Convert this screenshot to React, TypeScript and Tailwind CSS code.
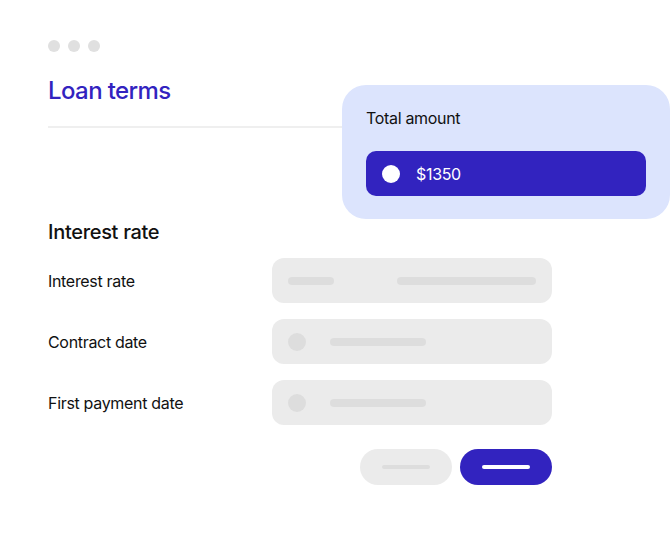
import React from 'react';

const fields = [
  { label: 'Interest rate', kind: 'split' },
  { label: 'Contract date', kind: 'dot' },
  { label: 'First payment date', kind: 'dot' },
];

const FieldPlaceholder: React.FC<{ kind: string }> = ({ kind }) => {
  if (kind === 'split') {
    return (
      <div className="flex h-[45px] w-[280px] items-center justify-between rounded-xl bg-[#ebebeb] px-4">
        <div className="h-2 w-[46px] rounded-full bg-[#dddddd]" />
        <div className="h-2 w-[139px] rounded-full bg-[#dddddd]" />
      </div>
    );
  }
  return (
    <div className="flex h-[45px] w-[280px] items-center gap-6 rounded-xl bg-[#ebebeb] px-4">
      <div className="h-[18px] w-[18px] rounded-full bg-[#dddddd]" />
      <div className="h-2 w-[96px] rounded-full bg-[#dddddd]" />
    </div>
  );
};

const App: React.FC = () => {
  return (
    <div
      className="relative h-[550px] w-[670px] overflow-hidden bg-white text-[#111111]"
      style={{ fontFamily: 'Inter, "Noto Sans", sans-serif' }}
    >
      <div className="flex flex-col pl-12 pt-10">
        <div className="flex gap-2">
          <div className="h-3 w-3 rounded-full bg-[#e0e0e0]" />
          <div className="h-3 w-3 rounded-full bg-[#e0e0e0]" />
          <div className="h-3 w-3 rounded-full bg-[#e0e0e0]" />
        </div>

        <h1 className="mt-[23px] text-[24px] font-medium leading-8 tracking-[-0.025em] text-[#3223bf]">
          Loan terms
        </h1>
        <div className="mt-[19px] h-[2px] w-[504px] bg-[#efefef]" />

        <h2 className="mt-[90px] text-[20px] font-medium leading-7 tracking-[-0.015em]">Interest rate</h2>

        <div className="mt-3 flex flex-col gap-4">
          {fields.map((f) => (
            <div key={f.label} className="flex items-center">
              <span className="w-[224px] text-[16px] leading-6 tracking-[-0.02em]">{f.label}</span>
              <FieldPlaceholder kind={f.kind} />
            </div>
          ))}
        </div>

        <div className="mt-6 flex w-[504px] justify-end gap-2">
          <div className="flex h-9 w-[92px] items-center justify-center rounded-full bg-[#ebebeb]">
            <div className="h-1 w-12 rounded-full bg-[#dddddd]" />
          </div>
          <div className="flex h-9 w-[92px] items-center justify-center rounded-full bg-[#3223bf]">
            <div className="h-1 w-12 rounded-full bg-white" />
          </div>
        </div>
      </div>

      {/* floating total card */}
      <div className="absolute left-[342px] top-[85px] w-[328px] rounded-3xl bg-[#dce4fd] px-6 pb-[23px] pt-[21px]">
        <p className="text-[16px] leading-6 tracking-[-0.02em]">Total amount</p>
        <div className="mt-[21px] flex h-[45px] w-[280px] items-center gap-4 rounded-[10px] bg-[#3223bf] px-4">
          <div className="h-[18px] w-[18px] rounded-full bg-white" />
          <span className="text-[16px] leading-6 tracking-[-0.02em] text-white">$1350</span>
        </div>
      </div>
    </div>
  );
};

export default App;
